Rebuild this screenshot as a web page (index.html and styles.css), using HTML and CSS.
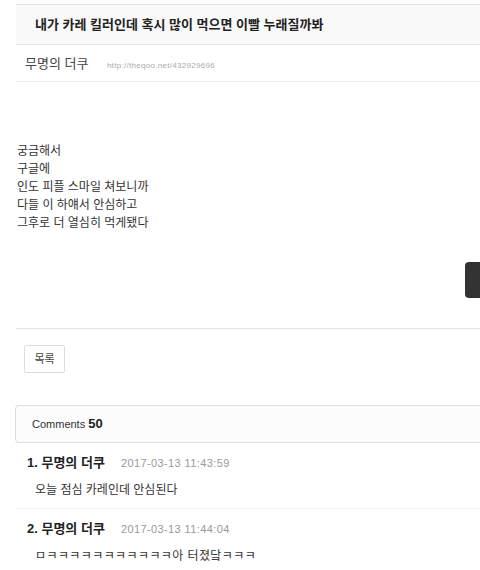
FILE: index.html
```html
<!DOCTYPE html>
<html lang="ko">
<head>
	<meta charset="UTF-8">
	<title>더쿠</title>
	<link rel="stylesheet" href="styles.css">
</head>
<body>
<div class="wrap">
	<div class="title">내가 카레 킬러인데 혹시 많이 먹으면 이빨 누래질까봐</div>
	<div class="info">
		<span class="author">무명의 더쿠</span>
		<span class="url">http://theqoo.net/432929696</span>
	</div>
	<div class="content">
		<div class="text">
			궁금해서<br>
			구글에<br>
			인도 피플 스마일 쳐보니까<br>
			다들 이 하얘서 안심하고<br>
			그후로 더 열심히 먹게됐다
		</div>
		<div class="side-btn"></div>
	</div>
	<div class="btns">
		<span class="btn">목록</span>
	</div>
	<div class="comments-head">Comments <b>50</b></div>
	<ul class="comments">
		<li>
			<div class="c-head"><b>1. 무명의 더쿠</b><span class="date">2017-03-13 11:43:59</span></div>
			<div class="c-body">오늘 점심 카레인데 안심된다</div>
		</li>
		<li>
			<div class="c-head"><b>2. 무명의 더쿠</b><span class="date">2017-03-13 11:44:04</span></div>
			<div class="c-body kk">ㅁㅋㅋㅋㅋㅋㅋㅋㅋㅋㅋㅋ아 터졌닼ㅋㅋㅋ</div>
		</li>
	</ul>
</div>
</body>
</html>
```

FILE: styles.css
```css
html, body{
	overflow: hidden;
}
body{
	margin: 0;
	background: #fff;
	font-family: "Liberation Sans", "Noto Sans CJK KR", sans-serif;
	color: #333;
}
.wrap{
	width: 600px;
	padding: 4px 0 0 16px;
}
.title{
	height: 39px;
	line-height: 39px;
	border-top: 1px solid #e4e4e4;
	border-bottom: 1px solid #e4e4e4;
	background: #f9f9f9;
	padding-left: 19px;
	font-size: 13px;
	font-weight: bold;
	color: #222;
}
.info{
	height: 36px;
	line-height: 36px;
	border-bottom: 1px solid #eee;
	padding-left: 9px;
}
.author{
	font-size: 13px;
	color: #444;
}
.url{
	font-size: 8px;
	letter-spacing: 0.3px;
	color: #aaa;
	margin-left: 14px;
}
.content{
	height: 246px;
	border-bottom: 1px solid #e4e4e4;
	display: flex;
}
.text{
	margin: 60px 0 0 1px;
	width: 448px;
	font-size: 12px;
	line-height: 18px;
	color: #333;
}
.side-btn{
	margin-top: 180px;
	width: 40px;
	height: 36px;
	background: #333;
	border-radius: 4px;
}
.btns{
	padding: 16px 0 0 8px;
	height: 60px;
}
.btn{
	display: inline-block;
	width: 39px;
	height: 26px;
	line-height: 26px;
	text-align: center;
	border: 1px solid #ddd;
	border-radius: 2px;
	font-size: 11px;
	color: #444;
}
.comments-head{
	margin-left: -1px;
	height: 36px;
	line-height: 36px;
	border: 1px solid #ddd;
	border-radius: 4px 0 0 4px;
	background: #fcfcfc;
	padding-left: 16px;
	font-size: 11px;
	color: #333;
}
.comments-head b{
	font-size: 13px;
	color: #222;
}
.comments{
	list-style: none;
	margin: 0;
	padding: 0;
}
.comments li{
	border-bottom: 1px solid #eee;
	padding: 10px 0 8px 11px;
}
.c-head{
	height: 20px;
	line-height: 20px;
	font-size: 13px;
	color: #222;
}
.date{
	font-size: 11px;
	letter-spacing: 0.4px;
	color: #999;
	margin-left: 16px;
}
.c-body{
	margin-top: 7px;
	padding-left: 8px;
	height: 20px;
	line-height: 20px;
	font-size: 12px;
	color: #333;
}
.kk{
	letter-spacing: 0.4px;
}
```
